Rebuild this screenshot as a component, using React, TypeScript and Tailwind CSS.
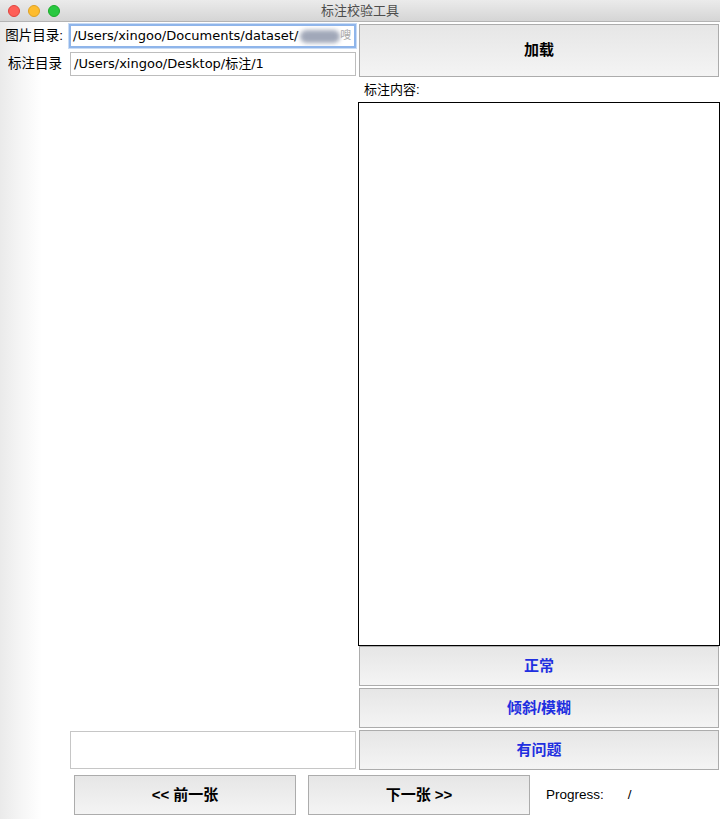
const font = "font-['Liberation_Sans','Noto_Sans_CJK_SC',sans-serif]";
const fieldFont = "font-['DejaVu_Sans','Noto_Sans_CJK_SC',sans-serif]";

function MacButton({
    label,
    className = "",
    textClass = "text-black",
}: {
    label: string;
    className?: string;
    textClass?: string;
}) {
    return (
        <button
            className={`flex items-center justify-center border border-[#acacac] bg-[linear-gradient(to_bottom,#e6e6e6,#f4f4f4)] text-[15px] font-bold ${textClass} ${className}`}
        >
            {label}
        </button>
    );
}

export default function App() {
    return (
        <div className={`${font} flex h-[819px] w-[720px] flex-col overflow-hidden bg-white`}>

            {/* title bar */}
            <div className="relative flex h-[22px] shrink-0 items-center justify-center border-b border-[#b4b4b4] bg-[linear-gradient(to_bottom,#ebebeb,#d5d5d5)]">
                <div className="absolute left-[8px] top-[5px] flex gap-[8px]">
                    <span className="h-[12px] w-[12px] rounded-full border border-[#e0443e] bg-[#fe5f57]" />
                    <span className="h-[12px] w-[12px] rounded-full border border-[#dea123] bg-[#febc2e]" />
                    <span className="h-[12px] w-[12px] rounded-full border border-[#1aab29] bg-[#28c840]" />
                </div>
                <span className="text-[13px] text-[#4d4d4d]">标注校验工具</span>
            </div>

            {/* body */}
            <div className="flex flex-1 flex-col bg-[linear-gradient(to_right,#eaeaea_0px,#f6f6f6_22px,#ffffff_42px)]">

                <div className="flex h-[748px]">

                    {/* left column */}
                    <div className="flex w-[358px] shrink-0 flex-col pt-[2px]">

                        <div className="flex h-[24px] items-center">
                            <span className="w-[66px] pr-[3px] text-right text-[13.5px] text-black">图片目录:</span>
                            <div className={`${fieldFont} ml-[3px] flex h-[24px] w-[287px] items-center overflow-hidden border-[2px] border-[#8fb5ea] bg-white px-[2px] text-[13px] text-black shadow-[0_0_0_1px_#c9dcf5]`}>
                                <span className="whitespace-nowrap">/Users/xingoo/Documents/dataset/</span>
                                <span className="ml-[2px] h-[13px] w-[40px] shrink-0 rounded-full bg-[#8a93a8] opacity-80 blur-[2px]" />
                                <span className="whitespace-nowrap text-[11px] text-[#aaa]">嗖</span>
                            </div>
                        </div>

                        <div className="mt-[4px] flex h-[24px] items-center">
                            <span className="w-[66px] pr-[4px] text-right text-[13.5px] text-black">标注目录</span>
                            <div className={`${fieldFont} ml-[4px] flex h-[24px] w-[286px] items-center border border-[#bdbdbd] bg-white px-[3px] text-[13px] text-black`}>
                                /Users/xingoo/Desktop/标注/1
                            </div>
                        </div>

                        <div className="flex-1" />

                        <div className="mb-[1px] ml-[70px] h-[38px] w-[286px] border border-[#c6c6c6] bg-white" />
                    </div>

                    {/* right column */}
                    <div className="flex flex-1 flex-col pt-[2px]">
                        <MacButton label="加载" className="ml-[1px] mr-[1px] h-[53px]" />

                        <div className="flex h-[25px] items-center pl-[6px] text-[13px] text-black">标注内容:</div>

                        <div className="h-[544px] border border-black bg-white" />

                        <div className="flex flex-col gap-[2px] px-[1px]">
                            <MacButton label="正常" className="h-[40px]" textClass="text-[#1f2fe0]" />
                            <MacButton label="倾斜/模糊" className="h-[40px]" textClass="text-[#1f2fe0]" />
                            <MacButton label="有问题" className="h-[40px]" textClass="text-[#1f2fe0]" />
                        </div>
                    </div>
                </div>

                {/* bottom row */}
                <div className="mt-[5px] flex h-[40px] items-center pl-[74px]">
                    <MacButton label="<< 前一张" className="h-[40px] w-[222px]" />
                    <MacButton label="下一张 >>" className="ml-[12px] h-[40px] w-[222px]" />
                    <span className="ml-[16px] text-[13.5px] text-black">Progress:</span>
                    <span className="ml-[24px] text-[13.5px] text-black">/</span>
                </div>
            </div>
        </div>
    );
}
